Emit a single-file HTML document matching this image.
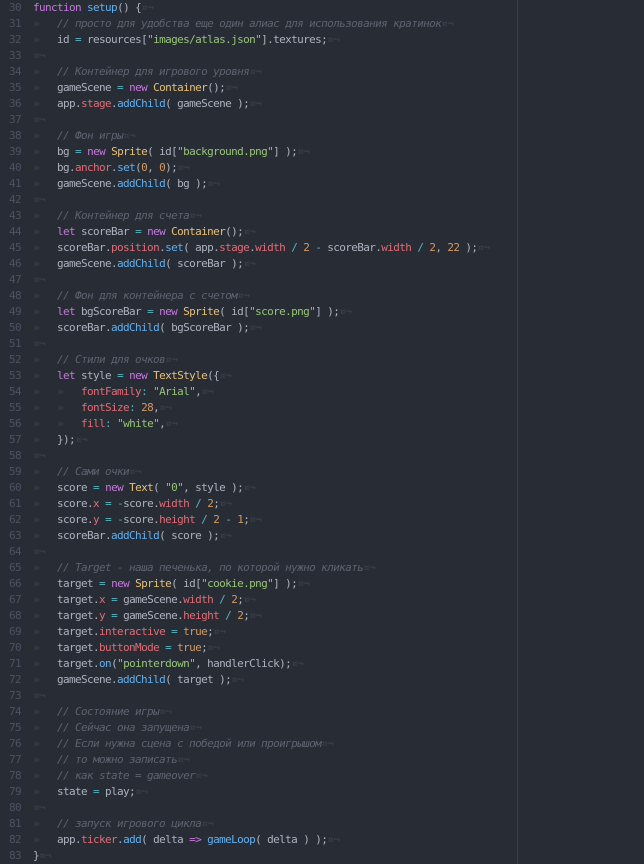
<!DOCTYPE html>
<html><head><meta charset="utf-8"><style>
html,body{margin:0;padding:0;background:#282c34;width:644px;height:864px;overflow:hidden}
#ed{position:relative;width:644px;height:864px;font-family:"DejaVu Sans Mono","Liberation Mono",monospace;font-size:11px;letter-spacing:-0.62px;color:#abb2bf}
.l{height:16px;line-height:16px;white-space:pre;position:relative}
.n{position:absolute;left:0;width:21px;text-align:right;color:#4b5263}
.c0{position:absolute;left:33px}
.k{color:#c678dd}.f{color:#61afef}.s{color:#98c379}.p{color:#e06c75}.y{color:#e5c07b}.o{color:#56b6c2}.d{color:#d19a66}
.m{color:#5c6370;font-style:italic}.i{color:#3e4451}.t{color:#3e4451}
#rule{position:absolute;left:517px;top:0;width:1px;height:864px;background:#3a3f4a}
</style></head><body><div id="ed"><div id="rule"></div>
<div class="l"><span class="n">30</span><span class="c0"><span class="k">function</span> <span class="f">setup</span>() {<span class="i">¤¬</span></span></div>
<div class="l"><span class="n">31</span><span class="c0"><span class="t">»   </span><span class="m">// просто для удобства еще один алиас для использования кратинок</span><span class="i">¤¬</span></span></div>
<div class="l"><span class="n">32</span><span class="c0"><span class="t">»   </span>id <span class="o">=</span> resources[<span class="s">"images/atlas.json"</span>].textures;<span class="i">¤¬</span></span></div>
<div class="l"><span class="n">33</span><span class="c0"><span class="i">¤¬</span></span></div>
<div class="l"><span class="n">34</span><span class="c0"><span class="t">»   </span><span class="m">// Контейнер для игрового уровня</span><span class="i">¤¬</span></span></div>
<div class="l"><span class="n">35</span><span class="c0"><span class="t">»   </span>gameScene <span class="o">=</span> <span class="k">new</span> <span class="y">Container</span>();<span class="i">¤¬</span></span></div>
<div class="l"><span class="n">36</span><span class="c0"><span class="t">»   </span>app.<span class="p">stage</span>.<span class="f">addChild</span>( gameScene );<span class="i">¤¬</span></span></div>
<div class="l"><span class="n">37</span><span class="c0"><span class="i">¤¬</span></span></div>
<div class="l"><span class="n">38</span><span class="c0"><span class="t">»   </span><span class="m">// Фон игры</span><span class="i">¤¬</span></span></div>
<div class="l"><span class="n">39</span><span class="c0"><span class="t">»   </span>bg <span class="o">=</span> <span class="k">new</span> <span class="y">Sprite</span>( id[<span class="s">"background.png"</span>] );<span class="i">¤¬</span></span></div>
<div class="l"><span class="n">40</span><span class="c0"><span class="t">»   </span>bg.<span class="p">anchor</span>.<span class="f">set</span>(<span class="d">0</span>, <span class="d">0</span>);<span class="i">¤¬</span></span></div>
<div class="l"><span class="n">41</span><span class="c0"><span class="t">»   </span>gameScene.<span class="f">addChild</span>( bg );<span class="i">¤¬</span></span></div>
<div class="l"><span class="n">42</span><span class="c0"><span class="i">¤¬</span></span></div>
<div class="l"><span class="n">43</span><span class="c0"><span class="t">»   </span><span class="m">// Контейнер для счета</span><span class="i">¤¬</span></span></div>
<div class="l"><span class="n">44</span><span class="c0"><span class="t">»   </span><span class="k">let</span> scoreBar <span class="o">=</span> <span class="k">new</span> <span class="y">Container</span>();<span class="i">¤¬</span></span></div>
<div class="l"><span class="n">45</span><span class="c0"><span class="t">»   </span>scoreBar.<span class="p">position</span>.<span class="f">set</span>( app.<span class="p">stage</span>.<span class="p">width</span> <span class="o">/</span> <span class="d">2</span> <span class="o">-</span> scoreBar.<span class="p">width</span> <span class="o">/</span> <span class="d">2</span>, <span class="d">22</span> );<span class="i">¤¬</span></span></div>
<div class="l"><span class="n">46</span><span class="c0"><span class="t">»   </span>gameScene.<span class="f">addChild</span>( scoreBar );<span class="i">¤¬</span></span></div>
<div class="l"><span class="n">47</span><span class="c0"><span class="i">¤¬</span></span></div>
<div class="l"><span class="n">48</span><span class="c0"><span class="t">»   </span><span class="m">// Фон для контейнера с счетом</span><span class="i">¤¬</span></span></div>
<div class="l"><span class="n">49</span><span class="c0"><span class="t">»   </span><span class="k">let</span> bgScoreBar <span class="o">=</span> <span class="k">new</span> <span class="y">Sprite</span>( id[<span class="s">"score.png"</span>] );<span class="i">¤¬</span></span></div>
<div class="l"><span class="n">50</span><span class="c0"><span class="t">»   </span>scoreBar.<span class="f">addChild</span>( bgScoreBar );<span class="i">¤¬</span></span></div>
<div class="l"><span class="n">51</span><span class="c0"><span class="i">¤¬</span></span></div>
<div class="l"><span class="n">52</span><span class="c0"><span class="t">»   </span><span class="m">// Стили для очков</span><span class="i">¤¬</span></span></div>
<div class="l"><span class="n">53</span><span class="c0"><span class="t">»   </span><span class="k">let</span> style <span class="o">=</span> <span class="k">new</span> <span class="y">TextStyle</span>({<span class="i">¤¬</span></span></div>
<div class="l"><span class="n">54</span><span class="c0"><span class="t">»   »   </span><span class="p">fontFamily</span><span class="o">:</span> <span class="s">"Arial"</span>,<span class="i">¤¬</span></span></div>
<div class="l"><span class="n">55</span><span class="c0"><span class="t">»   »   </span><span class="p">fontSize</span><span class="o">:</span> <span class="d">28</span>,<span class="i">¤¬</span></span></div>
<div class="l"><span class="n">56</span><span class="c0"><span class="t">»   »   </span><span class="p">fill</span><span class="o">:</span> <span class="s">"white"</span>,<span class="i">¤¬</span></span></div>
<div class="l"><span class="n">57</span><span class="c0"><span class="t">»   </span>});<span class="i">¤¬</span></span></div>
<div class="l"><span class="n">58</span><span class="c0"><span class="i">¤¬</span></span></div>
<div class="l"><span class="n">59</span><span class="c0"><span class="t">»   </span><span class="m">// Сами очки</span><span class="i">¤¬</span></span></div>
<div class="l"><span class="n">60</span><span class="c0"><span class="t">»   </span>score <span class="o">=</span> <span class="k">new</span> <span class="y">Text</span>( <span class="s">"0"</span>, style );<span class="i">¤¬</span></span></div>
<div class="l"><span class="n">61</span><span class="c0"><span class="t">»   </span>score.<span class="p">x</span> <span class="o">=</span> <span class="o">-</span>score.<span class="p">width</span> <span class="o">/</span> <span class="d">2</span>;<span class="i">¤¬</span></span></div>
<div class="l"><span class="n">62</span><span class="c0"><span class="t">»   </span>score.<span class="p">y</span> <span class="o">=</span> <span class="o">-</span>score.<span class="p">height</span> <span class="o">/</span> <span class="d">2</span> <span class="o">-</span> <span class="d">1</span>;<span class="i">¤¬</span></span></div>
<div class="l"><span class="n">63</span><span class="c0"><span class="t">»   </span>scoreBar.<span class="f">addChild</span>( score );<span class="i">¤¬</span></span></div>
<div class="l"><span class="n">64</span><span class="c0"><span class="i">¤¬</span></span></div>
<div class="l"><span class="n">65</span><span class="c0"><span class="t">»   </span><span class="m">// Target - наша печенька, по которой нужно кликать</span><span class="i">¤¬</span></span></div>
<div class="l"><span class="n">66</span><span class="c0"><span class="t">»   </span>target <span class="o">=</span> <span class="k">new</span> <span class="y">Sprite</span>( id[<span class="s">"cookie.png"</span>] );<span class="i">¤¬</span></span></div>
<div class="l"><span class="n">67</span><span class="c0"><span class="t">»   </span>target.<span class="p">x</span> <span class="o">=</span> gameScene.<span class="p">width</span> <span class="o">/</span> <span class="d">2</span>;<span class="i">¤¬</span></span></div>
<div class="l"><span class="n">68</span><span class="c0"><span class="t">»   </span>target.<span class="p">y</span> <span class="o">=</span> gameScene.<span class="p">height</span> <span class="o">/</span> <span class="d">2</span>;<span class="i">¤¬</span></span></div>
<div class="l"><span class="n">69</span><span class="c0"><span class="t">»   </span>target.<span class="p">interactive</span> <span class="o">=</span> <span class="d">true</span>;<span class="i">¤¬</span></span></div>
<div class="l"><span class="n">70</span><span class="c0"><span class="t">»   </span>target.<span class="p">buttonMode</span> <span class="o">=</span> <span class="d">true</span>;<span class="i">¤¬</span></span></div>
<div class="l"><span class="n">71</span><span class="c0"><span class="t">»   </span>target.<span class="f">on</span>(<span class="s">"pointerdown"</span>, handlerClick);<span class="i">¤¬</span></span></div>
<div class="l"><span class="n">72</span><span class="c0"><span class="t">»   </span>gameScene.<span class="f">addChild</span>( target );<span class="i">¤¬</span></span></div>
<div class="l"><span class="n">73</span><span class="c0"><span class="i">¤¬</span></span></div>
<div class="l"><span class="n">74</span><span class="c0"><span class="t">»   </span><span class="m">// Состояние игры</span><span class="i">¤¬</span></span></div>
<div class="l"><span class="n">75</span><span class="c0"><span class="t">»   </span><span class="m">// Сейчас она запущена</span><span class="i">¤¬</span></span></div>
<div class="l"><span class="n">76</span><span class="c0"><span class="t">»   </span><span class="m">// Если нужна сцена с победой или проигрышом</span><span class="i">¤¬</span></span></div>
<div class="l"><span class="n">77</span><span class="c0"><span class="t">»   </span><span class="m">// то можно записать</span><span class="i">¤¬</span></span></div>
<div class="l"><span class="n">78</span><span class="c0"><span class="t">»   </span><span class="m">// как state = gameover</span><span class="i">¤¬</span></span></div>
<div class="l"><span class="n">79</span><span class="c0"><span class="t">»   </span>state <span class="o">=</span> play;<span class="i">¤¬</span></span></div>
<div class="l"><span class="n">80</span><span class="c0"><span class="i">¤¬</span></span></div>
<div class="l"><span class="n">81</span><span class="c0"><span class="t">»   </span><span class="m">// запуск игрового цикла</span><span class="i">¤¬</span></span></div>
<div class="l"><span class="n">82</span><span class="c0"><span class="t">»   </span>app.<span class="p">ticker</span>.<span class="f">add</span>( delta <span class="k">=&gt;</span> <span class="f">gameLoop</span>( delta ) );<span class="i">¤¬</span></span></div>
<div class="l"><span class="n">83</span><span class="c0">}<span class="i">¤¬</span></span></div>
</div></body></html>
